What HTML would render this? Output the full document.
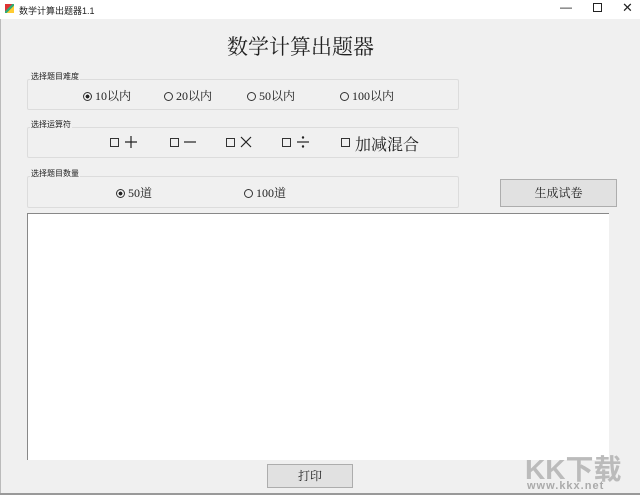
<!DOCTYPE html>
<html><head><meta charset="utf-8"><style>
body{margin:0;width:640px;height:495px;background:#f0f0f0;position:relative;overflow:hidden;font-family:"Liberation Serif","Noto Serif CJK SC",serif;color:#222}
.a{position:absolute}
.tb{left:0;top:0;width:640px;height:19px;background:#fff;font:9px "Liberation Sans","Noto Sans CJK SC",sans-serif}
.gb{border:1px solid #dcdcdc;border-radius:2px}
.lbl{font:8px "Noto Sans CJK SC",sans-serif;background:#f0f0f0;padding:0 1px}
.r{display:inline-block;width:7px;height:7px;border:1px solid #333;border-radius:50%;vertical-align:middle;margin-right:3px;position:relative;top:-1px}
.c{position:absolute;width:7px;height:7px;border:1px solid #333}
.t{font-size:12px}
.op{position:absolute;font:300 20px "DejaVu Sans",sans-serif;line-height:20px;font-weight:200}
.btn{background:#e1e1e1;border:1px solid #adadad;text-align:center;font-size:12px}
</style></head><body>
<div class="a tb"><div class="a" style="left:5px;top:4px;width:9px;height:9px;background:linear-gradient(135deg,#d33 0 40%,#3a7 40% 60%,#fc3 60%)"></div><span class="a" style="left:19px;top:4px">数学计算出题器1.1</span>
<span class="a" style="left:560px;top:0;font-size:12px">—</span><span class="a" style="left:593px;top:3px;width:7px;height:7px;border:1px solid #222"></span><span class="a" style="left:622px;top:0;font-size:13px">✕</span></div>
<div class="a" style="left:0;top:19px;width:1px;height:476px;background:#bbb"></div>
<div class="a" style="left:227px;top:31px;font-size:21px">数学计算出题器</div>
<div class="a gb" style="left:27px;top:79px;width:430px;height:29px"></div>
<div class="a lbl" style="left:30px;top:71px">选择题目难度</div>
<div class="a t" style="left:83px;top:87px"><span class="r" style="background:radial-gradient(#222 35%,transparent 40%)"></span>10以内</div>
<div class="a t" style="left:164px;top:87px"><span class="r"></span>20以内</div>
<div class="a t" style="left:247px;top:87px"><span class="r"></span>50以内</div>
<div class="a t" style="left:340px;top:87px"><span class="r"></span>100以内</div>
<div class="a gb" style="left:27px;top:127px;width:430px;height:29px"></div>
<div class="a lbl" style="left:30px;top:119px">选择运算符</div>
<span class="c" style="left:110px;top:138px"></span>
<svg class="a" style="left:124px;top:135px" width="14" height="14"><path d="M7 1V13M1 7H13" stroke="#222" stroke-width="1.2"/></svg>
<span class="c" style="left:170px;top:138px"></span>
<svg class="a" style="left:183px;top:135px" width="14" height="14"><path d="M1 7H13" stroke="#222" stroke-width="1.2"/></svg>
<span class="c" style="left:226px;top:138px"></span>
<svg class="a" style="left:239px;top:135px" width="14" height="14"><path d="M2 2L12 12M12 2L2 12" stroke="#222" stroke-width="1.2"/></svg>
<span class="c" style="left:282px;top:138px"></span>
<svg class="a" style="left:296px;top:135px" width="14" height="14"><path d="M1 7H13" stroke="#222" stroke-width="1.2"/><circle cx="7" cy="2.5" r="1.2" fill="#222"/><circle cx="7" cy="11.5" r="1.2" fill="#222"/></svg>
<span class="c" style="left:341px;top:138px"></span>
<div class="a" style="left:355px;top:132px;font-size:16px">加减混合</div>
<div class="a gb" style="left:27px;top:176px;width:430px;height:30px"></div>
<div class="a lbl" style="left:30px;top:168px">选择题目数量</div>
<div class="a t" style="left:116px;top:184px"><span class="r" style="background:radial-gradient(#222 35%,transparent 40%)"></span>50道</div>
<div class="a t" style="left:244px;top:184px"><span class="r"></span>100道</div>
<div class="a btn" style="left:500px;top:179px;width:115px;height:26px;line-height:26px">生成试卷</div>
<div class="a" style="left:27px;top:213px;width:581px;height:246px;background:#fff;border-top:1px solid #888;border-left:1px solid #888"></div>
<div class="a btn" style="left:267px;top:464px;width:84px;height:22px;line-height:22px">打印</div>
<div class="a" style="left:525px;top:448px;font:bold 28px 'Liberation Sans','Noto Sans CJK SC',sans-serif;color:#bbb">KK下载</div>
<div class="a" style="left:527px;top:480px;font:bold 11px 'Liberation Sans',sans-serif;color:#aaa;letter-spacing:1px">www.kkx.net</div>
<div class="a" style="left:0;top:493px;width:640px;height:2px;background:#999"></div>
</body></html>
